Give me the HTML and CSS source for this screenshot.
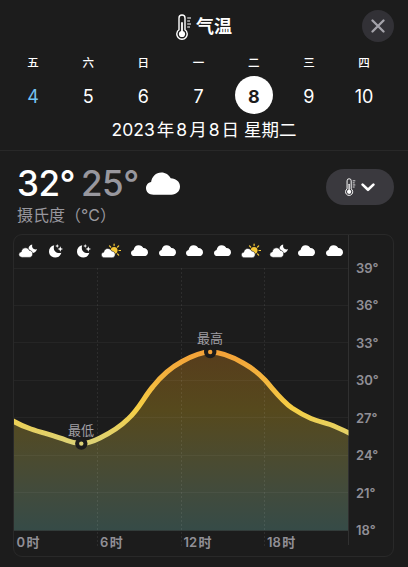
FILE: index.html
```html
<!DOCTYPE html>
<html lang="zh-CN">
<head>
    <meta charset="UTF-8">
    <meta name="viewport" content="width=device-width, initial-scale=1.0">
    <title>气温</title>
    <link rel="stylesheet" href="styles.css">
</head>
<body>

    <!-- Shared icons -->
    <svg class="sprite" width="0" height="0">
        <symbol id="thermo" viewBox="0 0 16 26">
            <path d="M3 15.8V4a3 3 0 0 1 6 0v11.8a5.2 5.2 0 1 1-6 0z" fill="none" stroke="#fff" stroke-width="1.4"/>
            <path d="M6 9v11" stroke="#fff" stroke-width="1.8" stroke-linecap="round"/>
            <circle cx="6" cy="20" r="3.1" fill="#fff"/>
            <path d="M11.2 4H15M11.2 7H14M11.2 10H15M11.2 13H14" stroke="#fff" stroke-width="1.2"/>
        </symbol>
        <symbol id="cloud" viewBox="0 0 34 23">
            <path d="M7.5 22.7C3.2 22.7 0 19.9 0 16.2c0-3.2 2.2-5.5 5.1-6.1C5.8 4.4 10 .4 15.3.4c4.3 0 7.7 2.2 9.4 5.8 5.3.1 9.3 3.5 9.3 8.3 0 4.7-3.7 8.2-8.6 8.2z" fill="#fff"/>
        </symbol>
        <symbol id="cloud-moon" viewBox="0 0 20 16">
            <path d="M14.2 1.6c-.7 3.2 1 5.4 4.8 4.7-.8 2.4-2.4 3.6-4.7 3.6-.4-1.3-1.4-2.2-2.7-2.4-.2-.8-.6-1.4-1.1-1.9.2-2 1.5-3.5 3.7-4z" fill="#fff"/>
            <path d="M4.2 14.4C2.2 14.4.8 13.2.8 11.6c0-1.5 1-2.5 2.4-2.7.4-2.5 2-4.1 4.3-4.1 1.9 0 3.3 1 3.9 2.6 1.9.1 3.3 1.5 3.3 3.5s-1.4 3.5-3.5 3.5z" fill="#fff" stroke="#1c1c1c" stroke-width=".6"/>
        </symbol>
        <symbol id="moon" viewBox="0 0 20 16">
            <path d="M8.2 2.2c-1.6 5 1.7 8.8 7.2 7.6-1 3.1-3.2 4.8-6.1 4.8-3.7 0-6.3-2.6-6.3-6.2 0-3 1.9-5.5 5.2-6.2z" fill="#fff"/>
            <path d="M11.2.9l.6 1.5 1.5.6-1.5.6-.6 1.5-.6-1.5L9.100 3l1.5-.6zM14.300 3.200l.8 2 2 .8-2 .8-.8 2-.8-2-2-.8 2-.8z" fill="#fff"/>
        </symbol>
        <symbol id="cloud-sun" viewBox="0 0 20 16">
            <circle cx="13.1" cy="7.5" r="3.4" fill="#f5c737"/>
            <path d="M13.1 1v1.600M8.500 2.900l1.100 1.100M17.700 2.900l-1.100 1.100M18 7.500h1.600M16.600 11l1.100 1.100" stroke="#f5c737" stroke-width="1.2" stroke-linecap="round"/>
            <path d="M4 14.800C1.800 14.800.3 13.600.3 11.900c0-1.500 1-2.500 2.400-2.700.4-2.300 2-3.700 4-3.700 1.900 0 3.400 1 4 2.600 2 .1 3.500 1.400 3.500 3.300 0 2-1.500 3.400-3.500 3.400z" fill="#fff" stroke="#1c1c1c" stroke-width=".6"/>
        </symbol>
    </svg>

    <div class="top">
        <header class="header">
            <h1 class="title">
                <svg class="title-icon"><use href="#thermo"/></svg>
                气温
            </h1>
            <button class="close" aria-label="关闭">
                <svg width="14" height="14" viewBox="0 0 14 14"><path d="M1.500 1.500l11 11M12.500 1.500l-11 11" stroke="#a4a3aa" stroke-width="2.3" stroke-linecap="round"/></svg>
            </button>
        </header>

        <div class="week">
            <div class="day"><span class="name">五</span><span class="num today">4</span></div>
            <div class="day"><span class="name">六</span><span class="num">5</span></div>
            <div class="day"><span class="name">日</span><span class="num">6</span></div>
            <div class="day"><span class="name">一</span><span class="num">7</span></div>
            <div class="day"><span class="name">二</span><span class="num selected">8</span></div>
            <div class="day"><span class="name">三</span><span class="num">9</span></div>
            <div class="day"><span class="name">四</span><span class="num">10</span></div>
        </div>
        <p class="date">2023<i></i>年<i></i>8<i></i>月<i></i>8<i></i>日 星期二</p>
    </div>

    <section class="summary">
        <div>
            <div class="temps">
                <span class="high">32°</span>
                <span class="low">25°</span>
                <svg class="now-icon"><use href="#cloud"/></svg>
            </div>
            <div class="unit">摄氏度（°C）</div>
        </div>
        <button class="picker" aria-label="气温">
            <svg class="picker-icon"><use href="#thermo"/></svg>
            <svg width="14" height="9" viewBox="0 0 14 9"><path d="M1.600 1.600L7 6.800l5.400-5.200" fill="none" stroke="#fff" stroke-width="2.6" stroke-linecap="round" stroke-linejoin="round"/></svg>
        </button>
    </section>

    <section class="card">
        <div class="icons">
            <svg><use href="#cloud-moon"/></svg>
            <svg><use href="#moon"/></svg>
            <svg><use href="#moon"/></svg>
            <svg><use href="#cloud-sun"/></svg>
            <svg class="small-cloud"><use href="#cloud"/></svg>
            <svg class="small-cloud"><use href="#cloud"/></svg>
            <svg class="small-cloud"><use href="#cloud"/></svg>
            <svg class="small-cloud"><use href="#cloud"/></svg>
            <svg><use href="#cloud-sun"/></svg>
            <svg><use href="#cloud-moon"/></svg>
            <svg class="small-cloud"><use href="#cloud"/></svg>
            <svg class="small-cloud"><use href="#cloud"/></svg>
        </div>

        <svg class="chart" width="380" height="290" viewBox="14 266 380 290">
            <defs>
                <linearGradient id="line" gradientUnits="userSpaceOnUse" x1="0" y1="352" x2="0" y2="444">
                    <stop offset="0" stop-color="#f3a238"/>
                    <stop offset=".3" stop-color="#f4b53e"/>
                    <stop offset=".62" stop-color="#f5cf45"/>
                    <stop offset="1" stop-color="#dcd276"/>
                </linearGradient>
                <linearGradient id="area" gradientUnits="userSpaceOnUse" x1="0" y1="352" x2="0" y2="530">
                    <stop offset="0" stop-color="#573d1c"/>
                    <stop offset=".33" stop-color="#56491d"/>
                    <stop offset=".6" stop-color="#4b4b30"/>
                    <stop offset=".8" stop-color="#414b3d"/>
                    <stop offset="1" stop-color="#364b47"/>
                </linearGradient>
                <clipPath id="plot"><rect x="14" y="266" width="334.5" height="265"/></clipPath>
            </defs>

            <path fill="url(#area)" clip-path="url(#plot)" d="M14 421.5C20 425 25 427 31 429C43 433 55 436 67 440.5C72 442.5 77 443.5 81.5 443.5C88 443.5 94 441 100 438C110 433 120 427 128 419C139 409 144 397 153 386.5C162 375 171 367.5 182 361.5C192 356 201 352 210 352C222 352 234 357.5 244 363.5C252 368 258 372.5 265 380C274 390 281 400 292 408C298 412 304 415.5 311 418.5C317 421 324 422.5 330 424.5C337 427 343 430 349 433V530.5H14Z"/>

            <!-- Grid -->
            <path class="grid" d="M14 268.5H348M14 305.5H348M14 342.5H348M14 380.5H348M14 417.5H348M14 455.5H348M14 492.5H348M14 530.5H348"/>
            <path class="grid dashed" d="M97.5 268V546M181.5 268V546M264.5 268V546"/>
            <path class="grid axis" d="M348.5 235V545"/>

            <path fill="none" stroke="url(#line)" stroke-width="5" clip-path="url(#plot)" d="M12 420.3L14 421.5C20 425 25 427 31 429C43 433 55 436 67 440.5C72 442.5 77 443.5 81.5 443.5C88 443.5 94 441 100 438C110 433 120 427 128 419C139 409 144 397 153 386.5C162 375 171 367.5 182 361.5C192 356 201 352 210 352C222 352 234 357.5 244 363.5C252 368 258 372.5 265 380C274 390 281 400 292 408C298 412 304 415.5 311 418.5C317 421 324 422.5 330 424.5C337 427 343 430 351 434"/>

            <!-- Low and high markers -->
            <circle cx="81.3" cy="443.6" r="4.2" fill="#dcd276" stroke="#1c1c1c" stroke-width="4"/>
            <circle cx="210.2" cy="352" r="4.2" fill="#f3a238" stroke="#1c1c1c" stroke-width="4"/>
            <text class="mark" x="81" y="434.5">最低</text>
            <text class="mark" x="210" y="343">最高</text>

            <g class="degrees">
                <text x="356" y="273">39°</text>
                <text x="356" y="310">36°</text>
                <text x="356" y="347.5">33°</text>
                <text x="356" y="385">30°</text>
                <text x="356" y="422.5">27°</text>
                <text x="356" y="460">24°</text>
                <text x="356" y="497.5">21°</text>
                <text x="356" y="535">18°</text>
            </g>
            <g class="hours">
                <text x="16.5" y="546.5">0<tspan dx="1.5">时</tspan></text>
                <text x="100" y="546.5">6<tspan dx="1.5">时</tspan></text>
                <text x="183.5" y="546.5">12<tspan dx="1.5">时</tspan></text>
                <text x="267" y="546.5">18<tspan dx="1.5">时</tspan></text>
            </g>
        </svg>
    </section>

</body>
</html>
```

FILE: styles.css
```css
/* Reset */
* {
    box-sizing: border-box;
    margin: 0;
    padding: 0;
}

body {
    width: 408px;
    height: 567px;
    overflow: hidden;
    background: #1c1c1c;
    color: #fff;
    font-family: Inter, "Noto Sans CJK SC", sans-serif;
}

.sprite {
    display: block;
}

button {
    border: none;
    display: flex;
    align-items: center;
    justify-content: center;
}

/* Header */
.top {
    height: 151px;
    border-bottom: 1px solid #282828;
}

.header {
    display: grid;
    grid-template-columns: 32px 1fr 32px;
    align-items: center;
    height: 52px;
    padding: 0 14px;
}

.title {
    grid-column: 2;
    display: flex;
    align-items: center;
    justify-content: center;
    gap: 4px;
    padding-top: 1px;
    font-size: 18px;
    line-height: 26px;
    font-weight: 700;
}

.title-icon {
    width: 16px;
    height: 26px;
}

.close {
    width: 32px;
    height: 32px;
    border-radius: 50%;
    background: #323136;
}

/* Week strip */
.week {
    display: grid;
    grid-template-columns: repeat(7, 55.2px);
    padding-left: 5.4px;
    height: 63px;
}

.day {
    display: flex;
    flex-direction: column;
    align-items: center;
}

.name {
    height: 24px;
    font-size: 11.5px;
    line-height: 23px;
    font-weight: 500;
}

.num {
    width: 38px;
    height: 38px;
    border-radius: 50%;
    font-size: 18px;
    line-height: 41px;
    text-align: center;
}

.today {
    color: #74c3f2;
}

.selected {
    background: #fff;
    color: #1c1c1c;
    font-weight: 700;
}

.date {
    font-size: 17.5px;
    line-height: 29px;
    text-align: center;
}

.date i {
    display: inline-block;
    width: 2px;
}

/* Summary */
.summary {
    display: flex;
    justify-content: space-between;
    align-items: flex-start;
    height: 83px;
    padding: 12px 14px 0 17px;
}

.temps {
    display: flex;
    align-items: center;
    height: 40px;
    font-size: 35px;
    line-height: 40px;
    font-weight: 500;
    letter-spacing: -0.5px;
}

.high {
    width: 64px;
}

.low {
    width: 65px;
    color: #98979e;
}

.now-icon {
    width: 34px;
    height: 23px;
}

.unit {
    color: #98979e;
    font-size: 16px;
    line-height: 24px;
}

.picker {
    gap: 5px;
    width: 68px;
    height: 36px;
    margin-top: 6px;
    border-radius: 18px;
    background: #3a393e;
}

.picker-icon {
    width: 11px;
    height: 18px;
}

/* Chart card */
.card {
    width: 381px;
    height: 323px;
    margin-left: 13px;
    border: 1px solid #292929;
    border-radius: 9px;
}

.icons {
    display: grid;
    grid-template-columns: repeat(12, 27.85px);
    place-items: center;
    height: 31px;
}

.icons svg {
    width: 20px;
    height: 16px;
}

.icons .small-cloud {
    width: 17px;
    height: 11.5px;
}

.chart {
    display: block;
    overflow: visible;
}

.grid {
    fill: none;
    stroke: rgba(255, 255, 255, 0.045);
}

.dashed {
    stroke: rgba(255, 255, 255, 0.08);
    stroke-dasharray: 2 2;
}

.grid.axis {
    stroke: #303030;
}

.mark {
    fill: #a09fa4;
    font-size: 13px;
    text-anchor: middle;
}

.degrees,
.hours {
    fill: #918f96;
    font-size: 13px;
    font-weight: 600;
}
```
